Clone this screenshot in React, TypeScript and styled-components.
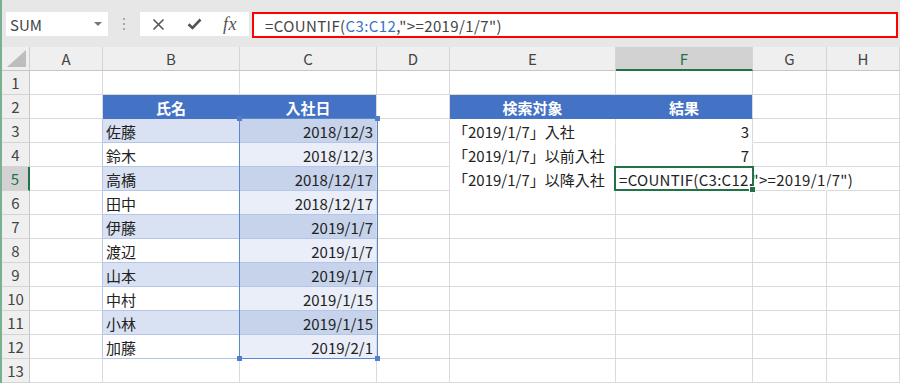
import React from 'react';
import styled, { createGlobalStyle } from 'styled-components';

const BLUE = '#4472c4';
const GREEN = '#217346';
const GRID = '#dadada';
const TABLE_LINE = '#b4c6e7';
const FONT = '"Noto Sans CJK JP", "Noto Sans", sans-serif';

const GlobalStyle = createGlobalStyle`
	html, body {
		margin: 0;
		padding: 0;
		background: #fff;
	}
	body {
		font-family: ${FONT};
	}
`;

const Window = styled.div`
	width: 900px;
	height: 383px;
	overflow: hidden;
	box-sizing: border-box;
	border-left: 2px solid #78b191;
	display: flex;
	flex-direction: column;
`;

const Toolbar = styled.div`
	height: 47px;
	flex: none;
	background: #e7e7e7;
	display: flex;
	align-items: flex-start;
	padding: 12px 0 0 4px;
	box-sizing: border-box;
`;

const NameBox = styled.div`
	width: 102px;
	height: 24px;
	background: #fff;
	display: flex;
	align-items: center;
	justify-content: space-between;
	padding: 0 6px 0 4px;
	box-sizing: border-box;
	font-size: 15px;
	color: #444;
`;

const DropArrow = styled.span`
	width: 0;
	height: 0;
	border-left: 4px solid transparent;
	border-right: 4px solid transparent;
	border-top: 4px solid #777;
`;

const Grip = styled.div`
	width: 32px;
	height: 24px;
	display: flex;
	flex-direction: column;
	align-items: center;
	justify-content: center;
	gap: 3px;
	span {
		width: 2px;
		height: 2px;
		background: #a8a8a8;
	}
`;

const FxButtons = styled.div`
	width: 109px;
	height: 24px;
	background: #fff;
	display: flex;
	margin-right: 3px;
`;

const FxButton = styled.div`
	width: 36px;
	display: flex;
	align-items: center;
	justify-content: center;
	color: #555;
`;

const FxLabel = styled.span`
	font-family: "Liberation Serif", serif;
	font-style: italic;
	font-size: 18px;
	color: #555;
	letter-spacing: 0.5px;
`;

const FormulaBox = styled.div`
	width: 646px;
	height: 26px;
	box-sizing: border-box;
	border: 2px solid #ff0000;
	background: #fff;
	display: flex;
	align-items: center;
	padding-left: 11px;
	font-size: 15px;
	color: #444;
	letter-spacing: 0.4px;
	white-space: pre;
`;

const Ref = styled.span`
	color: #3a72c8;
`;

const Sheet = styled.div`
	display: grid;
	grid-template-columns: 28px 73px 137px 137px 73px 166px 137px 74px 1fr;
	grid-template-rows: repeat(14, 24px);
	font-size: 15px;
	color: #222;
`;

type Place = { $row: number; $col: number };

const Corner = styled.div`
	grid-row: 1;
	grid-column: 1;
	background: #efefef;
	border-right: 1px solid #cfcfcf;
	border-bottom: 1px solid #c6c6c6;
	box-sizing: border-box;
	position: relative;
	&::after {
		content: '';
		position: absolute;
		right: 3px;
		bottom: 3px;
		width: 19px;
		height: 17px;
		background: #bdbdbd;
		clip-path: polygon(100% 0, 100% 100%, 0 100%);
	}
`;

const ColHead = styled.div<{ $active?: boolean; $col: number }>`
	grid-row: 1;
	grid-column: ${(p) => p.$col};
	background: ${(p) => (p.$active ? '#d2d2d2' : '#efefef')};
	color: ${(p) => (p.$active ? GREEN : '#444')};
	border-right: 1px solid #d4d4d4;
	border-bottom: ${(p) => (p.$active ? `2px solid ${GREEN}` : '1px solid #c6c6c6')};
	box-sizing: border-box;
	display: flex;
	align-items: center;
	justify-content: center;
	font-size: 15px;
`;

const RowHead = styled.div<{ $active?: boolean; $row: number }>`
	grid-row: ${(p) => p.$row};
	grid-column: 1;
	background: ${(p) => (p.$active ? '#d2d2d2' : '#efefef')};
	color: ${(p) => (p.$active ? GREEN : '#444')};
	border-right: ${(p) => (p.$active ? `2px solid ${GREEN}` : '1px solid #c6c6c6')};
	border-bottom: 1px solid #d4d4d4;
	box-sizing: border-box;
	display: flex;
	align-items: center;
	justify-content: center;
	font-size: 15px;
`;

type Align = 'left' | 'right' | 'center';

const Cell = styled.div<
	Place & {
		$bg?: string;
		$color?: string;
		$align?: Align;
		$bold?: boolean;
		$right?: string;
		$bottom?: string;
		$spaced?: boolean;
	}
>`
	grid-row: ${(p) => p.$row};
	grid-column: ${(p) => p.$col};
	background: ${(p) => p.$bg || 'transparent'};
	color: ${(p) => p.$color || '#222'};
	font-weight: ${(p) => (p.$bold ? 700 : 400)};
	letter-spacing: ${(p) => (p.$spaced ? '0.3px' : 'normal')};
	border-right: 1px solid ${(p) => p.$right || GRID};
	border-bottom: 1px solid ${(p) => p.$bottom || GRID};
	box-sizing: border-box;
	display: flex;
	align-items: center;
	justify-content: ${(p) =>
		p.$align === 'right' ? 'flex-end' : p.$align === 'center' ? 'center' : 'flex-start'};
	padding: 1px 3px 0 3px;
	white-space: nowrap;
	overflow: visible;
	position: relative;
	z-index: 1;
`;

const RangeMark = styled.div`
	grid-column: 4 / 5;
	grid-row: 4 / 14;
	margin: -1px -1px 0 -1px;
	border: 1px solid #5b87cf;
	position: relative;
	z-index: 3;
	pointer-events: none;
`;

const Handle = styled.span<{ $top?: boolean; $leftSide?: boolean }>`
	position: absolute;
	width: 5px;
	height: 5px;
	background: #4f7fcc;
	${(p) => (p.$top ? 'top: -3px;' : 'bottom: -3px;')}
	${(p) => (p.$leftSide ? 'left: -3px;' : 'right: -3px;')}
`;

const ActiveCell = styled.div`
	grid-column: 7 / 8;
	grid-row: 6 / 7;
	margin: -1px -1px 0 -2px;
	border: 2px solid ${GREEN};
	position: relative;
	z-index: 3;
	pointer-events: none;
	&::after {
		content: '';
		position: absolute;
		right: -4px;
		bottom: -4px;
		width: 5px;
		height: 5px;
		background: ${GREEN};
		border: 1px solid #fff;
	}
`;

const COLS = ['A', 'B', 'C', 'D', 'E', 'F', 'G', 'H'];
const NAMES = ['佐藤', '鈴木', '高橋', '田中', '伊藤', '渡辺', '山本', '中村', '小林', '加藤'];
const DATES = [
	'2018/12/3',
	'2018/12/3',
	'2018/12/17',
	'2018/12/17',
	'2019/1/7',
	'2019/1/7',
	'2019/1/7',
	'2019/1/15',
	'2019/1/15',
	'2019/2/1',
];
const SEARCH = [
	{ label: '「2019/1/7」入社', result: '3' },
	{ label: '「2019/1/7」以前入社', result: '7' },
	{ label: '「2019/1/7」以降入社', result: '=COUNTIF(C3:C12,">=2019/1/7")' },
];
const HEADERS: Record<string, string> = { B: '氏名', C: '入社日', E: '検索対象', F: '結果' };

type Spec = {
	text?: string;
	bg?: string;
	color?: string;
	align?: Align;
	bold?: boolean;
	right?: string;
	bottom?: string;
	spaced?: boolean;
};

function specFor(col: string, row: number): Spec {
	if (row === 2 && HEADERS[col]) {
		return {
			text: HEADERS[col],
			bg: BLUE,
			color: '#fff',
			bold: true,
			align: 'center',
			right: col === 'B' || col === 'E' ? BLUE : undefined,
			bottom: BLUE,
		};
	}
	if (row >= 3 && row <= 12) {
		const odd = row % 2 === 1;
		if (col === 'A') return { right: TABLE_LINE };
		if (col === 'B') {
			return {
				text: NAMES[row - 3],
				bg: odd ? '#d9e1f2' : '#fff',
				bottom: TABLE_LINE,
				right: TABLE_LINE,
			};
		}
		if (col === 'C') {
			return {
				text: DATES[row - 3],
				bg: odd ? '#c7d3eb' : '#e9eef8',
				align: 'right',
				bottom: TABLE_LINE,
			};
		}
	}
	if (row >= 3 && row <= 5) {
		const item = SEARCH[row - 3];
		if (col === 'E') return { text: item.label, bg: '#fff', bottom: '#fff' };
		if (col === 'F') {
			return row === 5
				? { text: item.result, bg: '#fff', bottom: '#fff', spaced: true }
				: { text: item.result, bg: '#fff', bottom: '#fff', align: 'right' };
		}
		if (col === 'G' && row === 5) return { right: '#fff' };
	}
	return {};
}

function CloseIcon() {
	return (
		<svg width="13" height="13" viewBox="0 0 13 13">
			<path d="M1.5 1.5 L11.5 11.5 M11.5 1.5 L1.5 11.5" stroke="#555" strokeWidth="1.6" fill="none" />
		</svg>
	);
}

function CheckIcon() {
	return (
		<svg width="15" height="12" viewBox="0 0 15 12">
			<path d="M1.5 6.2 L5.5 10 L13.5 1.5" stroke="#555" strokeWidth="2.6" fill="none" />
		</svg>
	);
}

function App() {
	const rows = Array.from({ length: 13 }, (_, i) => i + 1);

	return (
		<Window>
			<GlobalStyle />
			<Toolbar>
				<NameBox>
					SUM
					<DropArrow />
				</NameBox>
				<Grip>
					<span />
					<span />
					<span />
				</Grip>
				<FxButtons>
					<FxButton>
						<CloseIcon />
					</FxButton>
					<FxButton>
						<CheckIcon />
					</FxButton>
					<FxButton>
						<FxLabel>fx</FxLabel>
					</FxButton>
				</FxButtons>
				<FormulaBox>
					=COUNTIF(<Ref>C3:C12</Ref>,"&gt;=2019/1/7")
				</FormulaBox>
			</Toolbar>
			<Sheet>
				<Corner />
				{COLS.map((c, ci) => (
					<ColHead key={c} $col={ci + 2} $active={c === 'F'}>
						{c}
					</ColHead>
				))}
				{rows.map((r) => (
					<React.Fragment key={r}>
						<RowHead $row={r + 1} $active={r === 5}>
							{r}
						</RowHead>
						{COLS.map((c, ci) => {
							const s = specFor(c, r);
							return (
								<Cell
									key={c}
									$row={r + 1}
									$col={ci + 2}
									$bg={s.bg}
									$color={s.color}
									$align={s.align}
									$bold={s.bold}
									$right={s.right}
									$bottom={s.bottom}
									$spaced={s.spaced}
								>
									{s.text}
								</Cell>
							);
						})}
					</React.Fragment>
				))}
				<RangeMark>
					<Handle $top $leftSide />
					<Handle $top />
					<Handle $leftSide />
					<Handle />
				</RangeMark>
				<ActiveCell />
			</Sheet>
		</Window>
	);
}

export default App;
